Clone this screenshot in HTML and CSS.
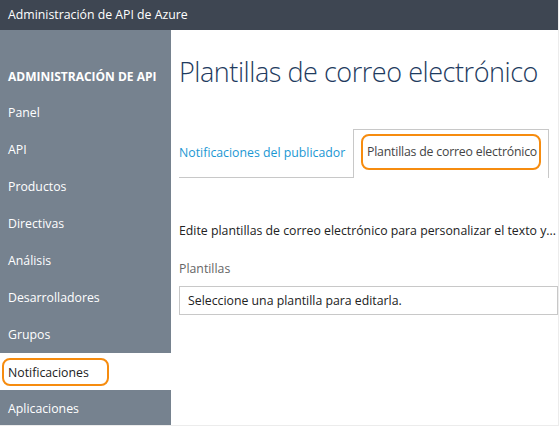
FILE: index.html
```html
<!DOCTYPE html>
<html lang="es">
<head>
<meta charset="utf-8">
<title>Administración de API de Azure</title>
<link rel="stylesheet" href="styles.css">
</head>
<body>
<div class="page">
  <header class="topbar">Administración de API de Azure</header>
  <div class="main">
    <nav class="sidebar">
      <div class="side-title">ADMINISTRACIÓN DE API</div>
      <ul class="nav">
        <li class="nav-item">Panel</li>
        <li class="nav-item">API</li>
        <li class="nav-item">Productos</li>
        <li class="nav-item">Directivas</li>
        <li class="nav-item">Análisis</li>
        <li class="nav-item">Desarrolladores</li>
        <li class="nav-item">Grupos</li>
        <li class="nav-item active"><span class="hl">Notificaciones</span></li>
        <li class="nav-item">Aplicaciones</li>
      </ul>
    </nav>
    <main class="content">
      <h1 class="title">Plantillas de correo electrónico</h1>
      <div class="tabs">
        <div class="tab">Notificaciones del publicador</div>
        <div class="tab tab-active"><span class="tab-hl">Plantillas de correo electrónico</span></div>
      </div>
      <p class="desc">Edite plantillas de correo electrónico para personalizar el texto y...</p>
      <div class="label">Plantillas</div>
      <div class="select">Seleccione una plantilla para editarla.</div>
    </main>
  </div>
</div>
</body>
</html>
```
FILE: styles.css
```css
* { box-sizing: border-box; }
html, body { margin: 0; padding: 0; }
body {
  background: #ececec;
  font-family: "Open Sans", "Noto Sans", sans-serif;
  font-size: 12.3px;
  color: #222;
  white-space: nowrap;
}
.page {
  width: 558px;
  height: 425px;
  background: #fff;
  overflow: hidden;
  display: flex;
  flex-direction: column;
}
.topbar {
  height: 30px;
  flex: none;
  background: #3e4652;
  color: #fff;
  padding-left: 8px;
  line-height: 29px;
}
.main {
  flex: 1;
  display: flex;
  min-height: 0;
}
.sidebar {
  width: 171px;
  flex: none;
  background: #76828f;
  color: #fff;
}
.side-title {
  height: 64px;
  padding: 37px 0 0 8px;
  font-weight: 700;
  font-size: 12px;
  line-height: 20px;
}
.nav {
  list-style: none;
  margin: 0;
  padding: 0;
}
.nav-item {
  height: 37px;
  line-height: 38px;
  padding-left: 8px;
}
.nav-item.active {
  background: #fff;
  color: #222;
  padding-left: 2px;
  display: flex;
  align-items: center;
}
.hl {
  display: inline-block;
  width: 107px;
  height: 28px;
  line-height: 25px;
  padding-left: 4px;
  border: 2px solid #f68c0f;
  border-radius: 8px;
}
.content {
  flex: 1;
  min-width: 0;
  padding-left: 8px;
}
.title {
  margin: 22px 0 0;
  font-weight: 300;
  font-size: 27px;
  letter-spacing: -0.45px;
  line-height: 40px;
  color: #1e3b60;
}
.tabs {
  display: flex;
  margin-top: 37px;
  align-items: flex-end;
}
.tab {
  height: 49px;
  width: 174px;
  line-height: 48px;
  color: #1b97d3;
  border-bottom: 1px solid #c8c8c8;
}
.tab-active {
  width: 196px;
  color: #444;
  border: 1px solid #c8c8c8;
  border-bottom: none;
  padding: 4px 7px 0;
}
.tab-hl {
  display: block;
  height: 36px;
  line-height: 32px;
  padding-left: 4px;
  letter-spacing: -0.2px;
  border: 2px solid #f68c0f;
  border-radius: 8px;
}
.desc {
  margin: 44px 0 0;
  line-height: 18px;
}
.label {
  margin-top: 20px;
  color: #666;
  line-height: 18px;
}
.select {
  margin-top: 8px;
  height: 29px;
  border: 1px solid #c8c8c8;
  padding-left: 8px;
  line-height: 27px;
}
```
